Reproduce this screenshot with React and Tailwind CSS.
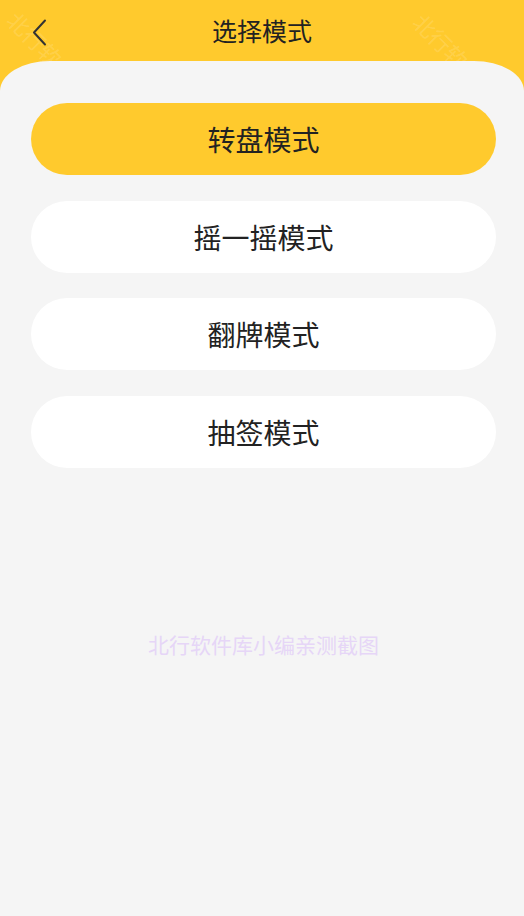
import { useState } from "react";

const modes = ["转盘模式", "摇一摇模式", "翻牌模式", "抽签模式"];

export default function App() {
  const [active, setActive] = useState(0);

  return (
    <div
      className="relative w-[524px] h-[916px] bg-[#ffca2d] overflow-hidden"
      style={{ fontFamily: '"Noto Sans CJK SC", "Noto Sans", sans-serif' }}
    >
      {/* header */}
      <div className="relative h-[61px] flex items-center justify-center">
        {/* faint corner watermarks, tucked under the panel */}
        <span className="absolute left-[2px] top-[22px] rotate-45 text-[22px] text-white/15 select-none">北行软</span>
        <span className="absolute left-[408px] top-[24px] rotate-45 text-[22px] text-white/15 select-none">北行软</span>

        <button className="absolute left-[26px] top-[14px] p-1" aria-label="返回">
          <svg width="20" height="30" viewBox="0 0 20 30" fill="none">
            <path d="M15 2.5 L4 14.5 L15 26.5" stroke="#333" strokeWidth="2" strokeLinecap="round" strokeLinejoin="round" />
          </svg>
        </button>
        <h1 className="relative text-[25px] text-[#222] leading-none -mt-[1px]">选择模式</h1>
      </div>

      {/* body */}
      <div className="relative h-[855px] bg-[#f5f5f5] rounded-tl-[50px_30px] rounded-tr-[50px_30px] pl-[31px] pr-[28px] pt-[42px] flex flex-col">
        <div className="flex flex-col gap-[25.67px]">
          {modes.map((m, i) => (
            <button
              key={m}
              onClick={() => setActive(i)}
              className={`h-[72px] rounded-full flex items-center justify-center text-[28px] text-[#222] ${
                active === i ? "bg-[#ffca2d]" : "bg-white"
              }`}
            >
              {m}
            </button>
          ))}
        </div>

        <p className="mt-[161px] text-center text-[21px] text-[#e6d6f7] select-none">北行软件库小编亲测截图</p>
      </div>
    </div>
  );
}
